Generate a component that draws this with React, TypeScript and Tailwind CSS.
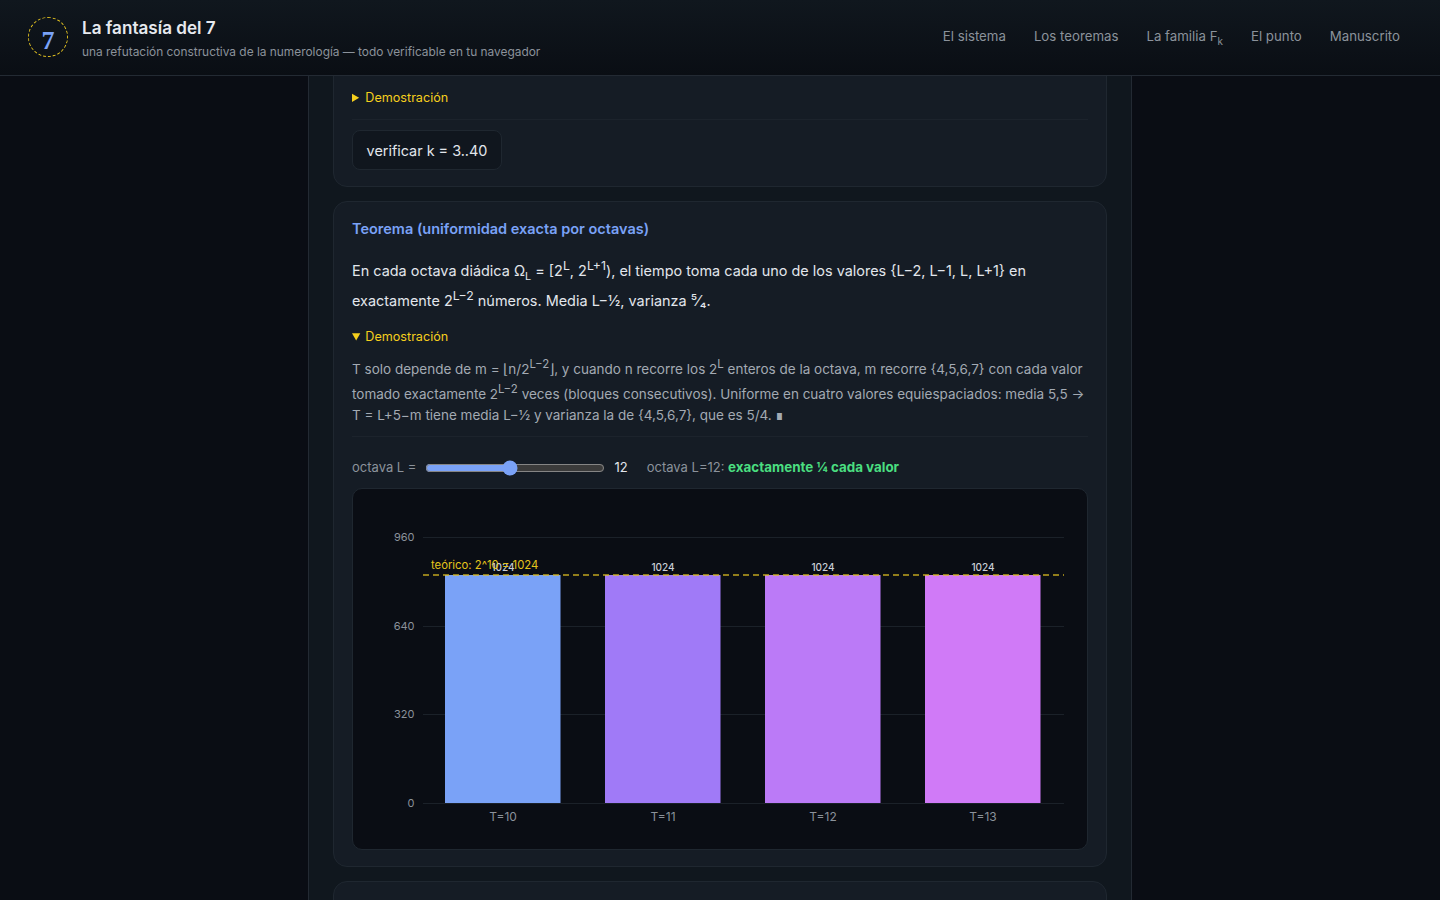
const navLinks = ["El sistema", "Los teoremas", "La familia", "El punto", "Manuscrito"];

const bars = [
  { label: "T=10", x: 445, color: "#7aa2f7" },
  { label: "T=11", x: 605, color: "#a07af7" },
  { label: "T=12", x: 765, color: "#bb7af7" },
  { label: "T=13", x: 925, color: "#d07af7" },
];

const ticks = [
  { label: "960", y: 537 },
  { label: "640", y: 626 },
  { label: "320", y: 714 },
  { label: "0", y: 803 },
];

function Sup({ children }: { children: React.ReactNode }) {
  return <sup className="static align-super text-[85%] leading-[inherit]">{children}</sup>;
}

function Header() {
  return (
    <header className="h-[76px] shrink-0 flex items-center justify-between pl-7 pr-10 border-b border-[#232a33] bg-gradient-to-b from-[#10171e] to-[#0a0e14]">
      <div className="flex items-center gap-3.5">
        <div className="w-[40px] h-[40px] -mt-px rounded-full border border-dashed border-[#e0c020] flex items-center justify-center text-[#7aa2f7] text-[26px] font-bold font-['Liberation_Serif',serif] leading-none pt-2">
          7
        </div>
        <div className="pt-[2px]">
          <div className="text-[17.1px] leading-[22px] font-semibold text-[#e6e9ef]">La fantasía del 7</div>
          <div className="text-[11.9px] leading-[18px] mt-[4px] text-[#8b929b]">
            una refutación constructiva de la numerología — todo verificable en tu navegador
          </div>
        </div>
      </div>
      <nav className="flex items-center gap-7 mb-[3px] text-[13.26px] text-[#8b929b]">
        {navLinks.map((link) => (
          <a key={link} className="leading-[20px]">
            {link}
            {link === "La familia" && (
              <>
                {" "}F<sub className="static align-sub text-[75%] leading-none">k</sub>
              </>
            )}
          </a>
        ))}
      </nav>
    </header>
  );
}

function Chart() {
  return (
    <div className="rounded-[10px] border border-[#1f2730] bg-[#0a0d14] h-[362px] overflow-hidden">
      <svg viewBox="353 489 734 360" className="block w-full h-full font-['Inter',sans-serif]">
        {ticks.map((t) => (
          <g key={t.label}>
            <line x1="423" x2="1064" y1={t.y + 0.5} y2={t.y + 0.5} stroke="#1b2129" />
            <text x="414.5" y={t.y + 4} textAnchor="end" fontSize="11" fill="#8b929b">
              {t.label}
            </text>
          </g>
        ))}
        {bars.map((b) => (
          <g key={b.label}>
            <rect x={b.x} y="575" width="115.5" height="228" fill={b.color} />
            <text x={b.x + 58} y="571" textAnchor="middle" fontSize="10" fontWeight="500" fill="#c9ced6">
              1024
            </text>
            <text x={b.x + 58} y="821" textAnchor="middle" fontSize="12" fill="#8b929b">
              {b.label}
            </text>
          </g>
        ))}
        <line x1="423" x2="1064" y1="575" y2="575" stroke="#e0c020" strokeOpacity="0.85" strokeWidth="1.5" strokeDasharray="6 4" />
        <text x="431" y="569" fontSize="11.3" fill="#e5c51c">
          teórico: 2^10 = 1024
        </text>
      </svg>
    </div>
  );
}

export default function App() {
  return (
    <div className="h-[900px] overflow-hidden flex flex-col bg-[#0a0d14] font-['Inter',sans-serif]">
      <Header />
      <main className="w-[824px] mx-auto flex-1 min-h-0 overflow-hidden border-x border-[#232a33] bg-[#10171e] px-6">
        {/* first card, its top is scrolled under the header */}
        <section className="-mt-3 h-[123px] rounded-b-[14px] border border-[#1f2730] bg-[#151c25] px-[18px] pt-[12px]">
          <details className="mt-[11px] text-[12.6px] leading-[20px] text-[#f5cf1d] pb-[11px] border-b border-[#1c232c]">
            <summary>Demostración</summary>
          </details>
          <button className="mt-[10px] h-[40px] w-[150px] pt-[1px] rounded-lg border border-[#1f2730] bg-[#10161e] text-[14.4px] text-[#e2e6ec]">
            verificar k = 3..40
          </button>
        </section>

        <section className="mt-[14px] h-[666px] rounded-[14px] border border-[#1f2730] bg-[#151c25] px-[18px] pt-[17px]">
          <h3 className="text-[14.5px] leading-[20px] font-semibold text-[#7aa2f7]">
            Teorema (uniformidad exacta por octavas)
          </h3>
          <p className="mt-[14px] text-[14.45px] leading-[25px] text-[#e2e6ec]">
            En cada octava diádica Ω<sub className="static align-sub text-[75%] leading-none">L</sub> = [2
            <Sup>L</Sup>, 2<Sup>L+1</Sup>), el tiempo toma cada uno de los valores {"{L−2, L−1, L, L+1}"} en
            exactamente 2<Sup>L−2</Sup> números. Media L−½, varianza ⁵⁄₄.
          </p>
          <details open className="mt-[14px] border-b border-[#1c232c] pb-[10px]">
            <summary className="text-[12.6px] leading-[20px] text-[#f5cf1d]">Demostración</summary>
            <p className="mt-[7px] text-[13.5px] leading-[21px] text-[#a3aab3]">
              T solo depende de m = ⌊n/2<Sup>L−2</Sup>⌋, y cuando n recorre los 2<Sup>L</Sup> enteros de la octava, m
              recorre {"{4,5,6,7}"} con cada valor tomado exactamente 2<Sup>L−2</Sup> veces (bloques consecutivos).
              Uniforme en cuatro valores equiespaciados: media 5,5 → T = L+5−m tiene media L−½ y varianza la de{" "}
              {"{4,5,6,7}"}, que es 5/4. ∎
            </p>
          </details>
          <div className="mt-[20px] h-[22px] flex items-center text-[13px] text-[#8b929b]">
            <span>octava L =</span>
            <input
              type="range"
              min={5}
              max={20}
              defaultValue={12}
              className="ml-[9px] w-[180px] accent-[#7aa2f7]"
            />
            <span className="ml-[9px] text-[#e2e6ec]">12</span>
            <span className="ml-[19px]">
              octava L=12:{" "}
              <strong className="text-[13.4px] font-bold text-[#4ade80]">exactamente ¼ cada valor</strong>
            </span>
          </div>
          <div className="mt-[9px]">
            <Chart />
          </div>
        </section>

        <section className="mt-[14px] h-[60px] rounded-t-[14px] border border-[#1f2730] bg-[#151c25]" />
      </main>
    </div>
  );
}
